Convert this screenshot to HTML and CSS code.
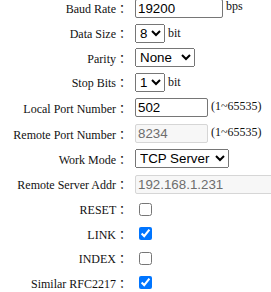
FILE: index.html
```html
<html lang="en"><head>
    <meta charset="UTF-8">
    <meta name="viewport" content="width=device-width, initial-scale=1.0">
    <title>Serial Port Settings</title>
    <link rel="stylesheet" href="styles.css">
  </head>
  <body>
    <!-- Serial / Network Settings -->
    <form class="settings" id="serialForm">
      <div class="row tall">
        <label class="row-label" for="baudRate">Baud Rate ：</label>
        <div class="row-field">
          <input type="text" id="baudRate" class="in-baud" value="19200">
          <span class="unit unit-high">bps</span>
        </div>
      </div>

      <div class="row">
        <label class="row-label" for="dataSize">Data Size ：</label>
        <div class="row-field">
          <select id="dataSize">
            <option>5</option>
            <option>6</option>
            <option>7</option>
            <option selected="">8</option>
          </select>
          <span class="unit">bit</span>
        </div>
      </div>

      <div class="row">
        <label class="row-label" for="parity">Parity ：</label>
        <div class="row-field">
          <select id="parity">
            <option selected="">None</option>
            <option>Odd</option>
            <option>Even</option>
            <option>Mark</option>
            <option>Space</option>
          </select>
        </div>
      </div>

      <div class="row">
        <label class="row-label" for="stopBits">Stop Bits ：</label>
        <div class="row-field">
          <select id="stopBits">
            <option selected="">1</option>
            <option>2</option>
          </select>
          <span class="unit">bit</span>
        </div>
      </div>

      <div class="row tall">
        <label class="row-label" for="localPort">Local Port Number ：</label>
        <div class="row-field">
          <input type="text" id="localPort" class="in-port" value="502">
          <span class="unit unit-mid">(1~65535)</span>
        </div>
      </div>

      <div class="row tall">
        <label class="row-label" for="remotePort">Remote Port Number ：</label>
        <div class="row-field">
          <input type="text" id="remotePort" class="in-port" value="8234" disabled="">
          <span class="unit unit-mid">(1~65535)</span>
        </div>
      </div>

      <div class="row">
        <label class="row-label" for="workMode">Work Mode ：</label>
        <div class="row-field">
          <select id="workMode">
            <option selected="">TCP Server</option>
            <option>TCP Client</option>
            <option>UDP Server</option>
            <option>UDP Client</option>
          </select>
        </div>
      </div>

      <div class="row tall">
        <label class="row-label" for="remoteAddr">Remote Server Addr ：</label>
        <div class="row-field">
          <input type="text" id="remoteAddr" class="in-addr" value="192.168.1.231" disabled="">
        </div>
      </div>

      <div class="row">
        <label class="row-label" for="reset">RESET ：</label>
        <div class="row-field">
          <input type="checkbox" id="reset">
        </div>
      </div>

      <div class="row">
        <label class="row-label" for="link">LINK ：</label>
        <div class="row-field">
          <input type="checkbox" id="link" checked="">
        </div>
      </div>

      <div class="row">
        <label class="row-label" for="index">INDEX ：</label>
        <div class="row-field">
          <input type="checkbox" id="index">
        </div>
      </div>

      <div class="row">
        <label class="row-label" for="rfc2217">Similar RFC2217 ：</label>
        <div class="row-field">
          <input type="checkbox" id="rfc2217" checked="">
        </div>
      </div>
    </form>
  </body></html>
```

FILE: styles.css
```css
/* General Styling */
body {
  margin: 0;
  padding: 0;
  font-family: "Liberation Serif", "Noto Sans CJK SC", serif;
  font-size: 12px;
  color: #111;
  background: #ffffff;
  overflow: hidden;
}

/* Settings list (page is scrolled a little, first row is cut) */
.settings {
  margin: -5px 0 0 0;
}

.row {
  display: flex;
  align-items: center;
  height: 24.5px;
}

.row.tall {
  height: 26px;
}

.row-label {
  width: 131px;
  flex: none;
  text-align: right;
  white-space: nowrap;
}

.row-field {
  margin-left: 4px;
  white-space: nowrap;
}

/* Inputs */
.row-field input[type="text"] {
  font-family: "Liberation Sans", Arial, sans-serif;
  font-size: 13.33px;
  height: 19px;
  box-sizing: border-box;
  padding: 1px 2px;
  border: 1px solid #767676;
  border-radius: 2px;
  color: #000;
  vertical-align: middle;
}

.row-field input[type="text"]:disabled {
  background-color: #f7f7f7;
  border-color: #d6d6d6;
  color: #6d6d6d;
}

.in-baud {
  width: 88px;
}

.in-port {
  width: 73px;
}

.in-addr {
  width: 160px;
}

.row-field select {
  font-family: "Liberation Sans", Arial, sans-serif;
  font-size: 13.33px;
  color: #000;
  vertical-align: middle;
}

.row-field input[type="checkbox"] {
  vertical-align: middle;
}

/* Units after a field */
.unit {
  vertical-align: middle;
}

.unit-high {
  vertical-align: 1px;
}

.unit-mid {
  vertical-align: 0;
}
```
